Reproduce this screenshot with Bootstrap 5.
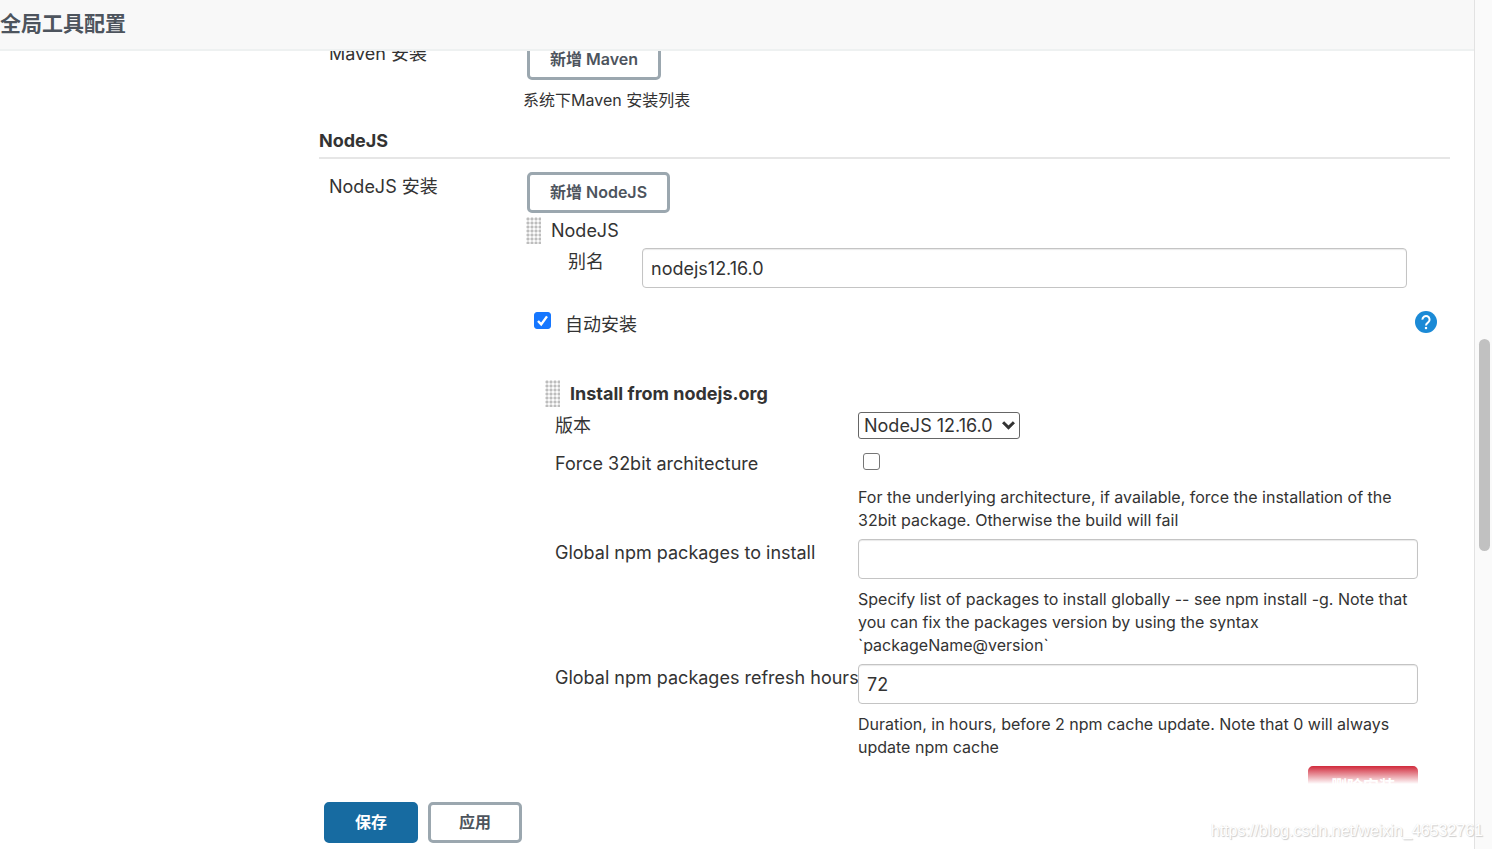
<!DOCTYPE html>
<html lang="zh-CN">
<head>
<meta charset="utf-8">
<meta name="viewport" content="width=device-width, initial-scale=1">
<title>全局工具配置</title>
<link href="https://cdn.jsdelivr.net/npm/bootstrap@5.3.0/dist/css/bootstrap.min.css" rel="stylesheet">
<style>
  body { font-family: Inter, "Noto Sans CJK SC", sans-serif; font-size: 18px; line-height: 28px; color: #333; background: #fff; }
  .page-head { background: #f8f8f8; border-bottom: 2px solid #eef1f1; height: 51px; }
  .page-head h1 { font-size: 21px; line-height: 47px; color: #4d545d; font-weight: 700; }
  .scroll-pane { min-height: 0; }
  .config-form { padding-left: 319px; padding-right: 24px; margin-top: -12px; }
  .config-row { display: grid; grid-template-columns: 194px minmax(0, 1fr); padding-left: 10px; }
  .row-label { padding-top: 1px; }
  .btn-tool { --bs-btn-color: #4d545d; --bs-btn-border-color: #9ba7af; --bs-btn-border-width: 3px; --bs-btn-border-radius: 5px; --bs-btn-hover-color: #4d545d; --bs-btn-hover-border-color: #808d96;
    --bs-btn-font-weight: 600; --bs-btn-font-size: 16px; --bs-btn-padding-x: 20px; --bs-btn-padding-y: 0; height: 41px; line-height: 35px; }
  .btn-save { --bs-btn-color: #fff; --bs-btn-bg: #176ba1; --bs-btn-border-color: #176ba1; --bs-btn-hover-color: #fff; --bs-btn-hover-bg: #125580; }
  .btn-wide { width: 94px; }
  .btn-remove { --bs-btn-color: #fff; --bs-btn-bg: #cc1225; --bs-btn-border-color: #cc1225; --bs-btn-hover-color: #fff; --bs-btn-hover-bg: #a80f1f; width: 110px; }
  .hint { font-size: 16px; line-height: 23px; margin-top: 9px; padding-bottom: 7px; }
  .section-title { font-size: 18px; line-height: 28px; font-weight: 700; border-bottom: 2px solid #e6e6e6; padding-bottom: 2px; margin: 8px 0 13px; }
  .grip-line { gap: 10px; }
  .tool-head { margin: 4px 0 0 3px; }
  .grip { width: 15px; height: 27px; background: radial-gradient(circle, #bdbdbd 1px, #fbfbfb 2px) 0 0 / 4px 4px; }
  .field { font-size: 18px; height: 40px; padding: 0 8px; border: 1px solid #c4c4c4; border-radius: 4px; color: #333; box-shadow: inset 0 1px 1px #e9e9e9; }
  .tick { width: 17px; height: 17px; margin: 0; border: 1px solid #767676; border-radius: 3px !important; }
  .tick:checked { background-color: #1677ff; border-color: #1677ff;
    background-image: url("data:image/svg+xml,%3Csvg xmlns='http://www.w3.org/2000/svg' viewBox='0 0 15 15'%3E%3Cpath d='M3 8l3.2 3.4L12 3.4' fill='none' stroke='%23fff' stroke-width='2.4'/%3E%3C/svg%3E"); }
  .alias-row { display: grid; grid-template-columns: 74px minmax(0, 1fr); margin: 3px 43px 0 45px; }
  .auto-row { height: 28px; margin: 22px 13px 0 11px; padding-top: 1px; gap: 14px; }
  .auto-row .tick { margin-top: 1px; }
  .installer { margin: 42px 32px 0 22px; }
  .installer-row { display: grid; grid-template-columns: 303px minmax(0, 1fr); padding-left: 10px; }
  .version-cell { padding-bottom: 11px; }
  .tick-cell { padding: 3px 0 7px 5px; }
  .version-select { width: 162px; height: 27px; font-size: 18px; line-height: 24px; padding: 0 26px 0 5px; border: 1px solid #666; border-radius: 3px; color: #333;
    background: #fff url("data:image/svg+xml,%3Csvg xmlns='http://www.w3.org/2000/svg' viewBox='0 0 12 8'%3E%3Cpath d='M1 1l5 5 5-5' fill='none' stroke='%23333' stroke-width='2.8'/%3E%3C/svg%3E") no-repeat right 4px center / 13px 9px; }
  .bottom-fade { height: 20px; background: linear-gradient(#ffffff00, #fff); }
  .bottom-bar { background: #fff; padding: 18px 0 6px 324px; gap: 10px; }
  .scroll-track { width: 18px; background: #fafafa; border-left: 1px solid #e2e2e2; padding: 0 2px 0 4px; }
  .scroll-thumb { margin-top: 339px; height: 25vh; border-radius: 6px; background: #c1c1c1; width: 11px; }
  .stamp { font: 16px/22px "Liberation Sans", sans-serif; color: #fff; text-shadow: 1px 1px 1px #ccc, 0 0 1px #ddd; right: 9px; bottom: 7px; z-index: 5; }
</style>
</head>
<body>
<div class="d-flex vh-100 overflow-hidden position-relative">
  <div class="d-flex flex-column flex-grow-1 overflow-hidden position-relative">
    <header class="page-head flex-shrink-0"><h1 class="m-0">全局工具配置</h1></header>

    <main class="scroll-pane flex-grow-1 overflow-hidden">
      <form class="config-form">
        <div class="config-row">
          <div class="row-label">Maven 安装</div>
          <div>
            <button type="button" class="btn btn-tool ms-1">新增 Maven</button>
            <div class="hint">系统下Maven 安装列表</div>
          </div>
        </div>

        <h2 class="section-title">NodeJS</h2>

        <div class="config-row">
          <div class="row-label">NodeJS 安装</div>
          <div>
            <button type="button" class="btn btn-tool ms-1">新增 NodeJS</button>
            <div class="grip-line tool-head d-flex align-items-start">
              <span class="grip"></span><span>NodeJS</span>
            </div>
            <div class="alias-row">
              <label for="alias">别名</label>
              <input id="alias" type="text" class="form-control field" value="nodejs12.16.0">
            </div>
            <div class="auto-row d-flex align-items-start">
              <input id="auto" type="checkbox" class="form-check-input tick" checked>
              <label for="auto">自动安装</label>
              <a href="#" class="ms-auto d-flex" aria-label="帮助">
                <svg viewBox="0 0 24 24" width="22" height="22"><circle cx="12" cy="12" r="12" fill="#1b8ad6"/><path d="M8.1 9.4a3.9 3.9 0 1 1 6.4 2.9c-1.5 1.2-2.5 1.8-2.5 3.6" fill="none" stroke="#fff" stroke-width="2.2"/><rect x="10.8" y="17.4" width="2.4" height="2.4" fill="#fff"/></svg>
              </a>
            </div>

            <div class="installer">
              <div class="grip-line d-flex align-items-start">
                <span class="grip"></span><strong>Install from nodejs.org</strong>
              </div>
              <div class="installer-row mt-1">
                <label for="version">版本</label>
                <div class="version-cell d-flex">
                  <select id="version" class="form-select version-select"><option>NodeJS 12.16.0</option></select>
                </div>
              </div>
              <div class="installer-row">
                <label for="force">Force 32bit architecture</label>
                <div>
                  <div class="tick-cell d-flex"><input id="force" type="checkbox" class="form-check-input tick"></div>
                  <div class="hint">For the underlying architecture, if available, force the installation of the 32bit package. Otherwise the build will fail</div>
                </div>
              </div>
              <div class="installer-row">
                <label for="packages">Global npm packages to install</label>
                <div>
                  <input id="packages" type="text" class="form-control field">
                  <div class="hint">Specify list of packages to install globally -- see npm install -g. Note that you can fix the packages version by using the syntax `packageName@version`</div>
                </div>
              </div>
              <div class="installer-row">
                <label for="hours" class="text-nowrap">Global npm packages refresh hours</label>
                <div>
                  <input id="hours" type="text" class="form-control field" value="72">
                  <div class="hint">Duration, in hours, before 2 npm cache update. Note that 0 will always update npm cache</div>
                </div>
              </div>
              <div class="d-flex justify-content-end">
                <button type="button" class="btn btn-tool btn-remove">删除安装</button>
              </div>
            </div>
          </div>
        </div>
      </form>
    </main>

    <div class="position-absolute bottom-0 start-0 end-0">
      <div class="bottom-fade"></div>
      <div class="bottom-bar d-flex">
        <button type="button" class="btn btn-tool btn-save btn-wide">保存</button>
        <button type="button" class="btn btn-tool btn-wide">应用</button>
      </div>
    </div>
  </div>

  <div class="scroll-track flex-shrink-0"><div class="scroll-thumb"></div></div>
  <div class="stamp position-absolute">https://blog.csdn.net/weixin_46532761</div>
</div>
<script src="https://cdn.jsdelivr.net/npm/bootstrap@5.3.0/dist/js/bootstrap.bundle.min.js"></script>
</body>
</html>
